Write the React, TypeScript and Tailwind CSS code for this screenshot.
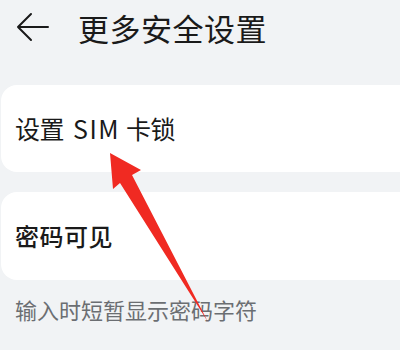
import React from 'react';

const font = { fontFamily: '"Noto Sans CJK SC", "Noto Sans", sans-serif' };

const App: React.FC = () => {
  return (
    <div
      className="relative w-[400px] h-[350px] overflow-hidden bg-[#f1f3f5]"
      style={font}
    >
      {/* Header */}
      <div className="flex items-center h-[54px]">
        <svg width="34" height="30" viewBox="0 0 34 30" className="ml-[16px]">
          <path
            d="M2 15 H32 M15 2 L2 15 L15 28"
            fill="none"
            stroke="#1a1a1a"
            strokeWidth="2"
            strokeLinecap="round"
            strokeLinejoin="round"
          />
        </svg>
        <h1 className="ml-[28px] text-[31px] leading-none text-[#1a1a1a] tracking-[0.5px]">
          更多安全设置
        </h1>
      </div>

      {/* Cards */}
      <div className="mt-[31px] ml-[1px] w-[440px] h-[87px] bg-white rounded-[16px] flex items-center px-[14px]">
        <span className="flex items-center text-[25px] text-[#1a1a1a] leading-none">
          <span className="tracking-[-0.5px]">设置</span>
          <span className="ml-[9px] tracking-[1.5px]">SIM</span>
          <span className="ml-[6px] tracking-[-0.5px]">卡锁</span>
        </span>
      </div>

      <div className="mt-[20px] ml-[1px] w-[440px] h-[88px] bg-white rounded-[16px] flex items-center px-[14px]">
        <span className="text-[24px] font-medium text-[#1a1a1a] tracking-[0.5px]">密码可见</span>
      </div>

      <p className="mt-[14px] ml-[15px] text-[22px] leading-[30px] text-[#6b6e72]">
        输入时短暂显示密码字符
      </p>

      {/* Red annotation arrow */}
      <svg
        className="absolute left-0 top-0 pointer-events-none"
        width="400"
        height="350"
        viewBox="0 0 400 350"
      >
        <polygon
          points="110,153 141,170 132,175 208,322 120,183 113,189"
          fill="#f02a22"
        />
      </svg>
    </div>
  );
};

export default App;
